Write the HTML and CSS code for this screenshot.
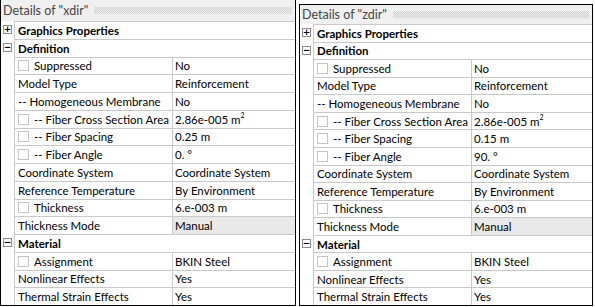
FILE: index.html
```html
<!DOCTYPE html>
<html>
	<head>
		<meta charset="utf-8" />
		<title>Details</title>
		<link rel="stylesheet" href="styles.css">
	</head>
	<body>
		<div class="wrap">
			<div class="panel panel-left">
				<div class="title"><span>Details of "xdir"</span><i class="grip"></i></div>
				<div class="rows">
					<div class="row cat"><span class="gut"><b class="exp">+</b></span><span class="cell">Graphics Properties</span></div>
					<div class="row cat"><span class="gut"><b class="exp">&minus;</b></span><span class="cell">Definition</span></div>
					<div class="row"><span class="gut"></span><span class="name"><i class="chk"></i>Suppressed</span><span class="val">No</span></div>
					<div class="row"><span class="gut"></span><span class="name">Model Type</span><span class="val">Reinforcement</span></div>
					<div class="row"><span class="gut"></span><span class="name">-- Homogeneous Membrane</span><span class="val">No</span></div>
					<div class="row"><span class="gut"></span><span class="name"><i class="chk"></i>-- Fiber Cross Section Area</span><span class="val">2.86e-005 m<sup>2</sup></span></div>
					<div class="row"><span class="gut"></span><span class="name"><i class="chk"></i>-- Fiber Spacing</span><span class="val">0.25 m</span></div>
					<div class="row"><span class="gut"></span><span class="name"><i class="chk"></i>-- Fiber Angle</span><span class="val">0. &deg;</span></div>
					<div class="row"><span class="gut"></span><span class="name">Coordinate System</span><span class="val">Coordinate System</span></div>
					<div class="row"><span class="gut"></span><span class="name">Reference Temperature</span><span class="val">By Environment</span></div>
					<div class="row"><span class="gut"></span><span class="name"><i class="chk"></i>Thickness</span><span class="val">6.e-003 m</span></div>
					<div class="row"><span class="gut"></span><span class="name">Thickness Mode</span><span class="val grey">Manual</span></div>
					<div class="row cat"><span class="gut"><b class="exp">&minus;</b></span><span class="cell">Material</span></div>
					<div class="row"><span class="gut"></span><span class="name"><i class="chk"></i>Assignment</span><span class="val">BKIN Steel</span></div>
					<div class="row"><span class="gut"></span><span class="name">Nonlinear Effects</span><span class="val">Yes</span></div>
					<div class="row"><span class="gut"></span><span class="name">Thermal Strain Effects</span><span class="val">Yes</span></div>
				</div>
			</div>
			<div class="panel panel-right">
				<div class="title"><span>Details of "zdir"</span><i class="grip"></i></div>
				<div class="rows">
					<div class="row cat"><span class="gut"><b class="exp">+</b></span><span class="cell">Graphics Properties</span></div>
					<div class="row cat"><span class="gut"><b class="exp">&minus;</b></span><span class="cell">Definition</span></div>
					<div class="row"><span class="gut"></span><span class="name"><i class="chk"></i>Suppressed</span><span class="val">No</span></div>
					<div class="row"><span class="gut"></span><span class="name">Model Type</span><span class="val">Reinforcement</span></div>
					<div class="row"><span class="gut"></span><span class="name">-- Homogeneous Membrane</span><span class="val">No</span></div>
					<div class="row"><span class="gut"></span><span class="name"><i class="chk"></i>-- Fiber Cross Section Area</span><span class="val">2.86e-005 m<sup>2</sup></span></div>
					<div class="row"><span class="gut"></span><span class="name"><i class="chk"></i>-- Fiber Spacing</span><span class="val">0.15 m</span></div>
					<div class="row"><span class="gut"></span><span class="name"><i class="chk"></i>-- Fiber Angle</span><span class="val">90. &deg;</span></div>
					<div class="row"><span class="gut"></span><span class="name">Coordinate System</span><span class="val">Coordinate System</span></div>
					<div class="row"><span class="gut"></span><span class="name">Reference Temperature</span><span class="val">By Environment</span></div>
					<div class="row"><span class="gut"></span><span class="name"><i class="chk"></i>Thickness</span><span class="val">6.e-003 m</span></div>
					<div class="row"><span class="gut"></span><span class="name">Thickness Mode</span><span class="val grey">Manual</span></div>
					<div class="row cat"><span class="gut"><b class="exp">&minus;</b></span><span class="cell">Material</span></div>
					<div class="row"><span class="gut"></span><span class="name"><i class="chk"></i>Assignment</span><span class="val">BKIN Steel</span></div>
					<div class="row"><span class="gut"></span><span class="name">Nonlinear Effects</span><span class="val">Yes</span></div>
					<div class="row"><span class="gut"></span><span class="name">Thermal Strain Effects</span><span class="val">Yes</span></div>
				</div>
			</div>
		</div>
	</body>
</html>
```

FILE: styles.css
```css
body{
	margin: 0;
	background: #fff;
	font: 11.5px Lato, "Liberation Sans", sans-serif;
	color: #000;
}
.wrap{
	display: flex;
	align-items: flex-start;
	gap: 3px;
}
.panel{
	display: flex;
	flex-direction: column;
	border: 1px solid #000;
	box-sizing: border-box;
}
.panel-left{
	width: 296px;
	height: 307px;
	margin-top: -1px;
}
.panel-right{
	width: 294px;
	height: 302px;
	margin-top: 4px;
}
.title{
	display: flex;
	align-items: center;
	background: #f0f0f0;
	color: #444;
	padding: 0 3px 0 2px;
	font-size: 12.5px;
	height: 21px;
	flex: none;
}
.panel-right .title{
	height: 19px;
}
/* dotted gripper after the title */
.grip{
	flex: 1;
	height: 7px;
	margin-left: 6px;
	background-image: conic-gradient(#cdcdcd 25%, transparent 0 50%, #cdcdcd 0 75%, transparent 0);
	background-size: 2px 2px;
}
.rows{
	flex: 1;
	display: flex;
	flex-direction: column;
}
.row{
	flex: 1;
	display: flex;
	min-height: 0;
}
.row > span{
	display: flex;
	align-items: center;
	white-space: nowrap;
}
.gut{
	width: 13px;
	border-right: 1px solid #c9c9c9;
	justify-content: center;
	flex: none;
}
.name, .val, .cell{
	border-top: 1px solid #c9c9c9;
}
.name{
	width: 154px;
	padding-left: 3px;
	border-right: 1px solid #c9c9c9;
	flex: none;
}
.val{
	flex: 1;
	padding-left: 2px;
}
.val.grey{
	background: #e9e9e9;
}
.cell{
	flex: 1;
	padding-left: 3px;
	font-weight: bold;
}
.exp{
	width: 7px;
	height: 7px;
	border: 1px solid #8c8c8c;
	display: flex;
	align-items: center;
	justify-content: center;
	font: bold 9px/1 "DejaVu Sans", sans-serif;
	color: #000;
}
.chk{
	width: 9px;
	height: 9px;
	border: 1px solid #c4c4c4;
	background: #fff;
	margin-right: 5px;
	flex: none;
}
sup{
	font-size: 7px;
	line-height: 0;
	align-self: flex-start;
	margin-top: 4px;
}
```
